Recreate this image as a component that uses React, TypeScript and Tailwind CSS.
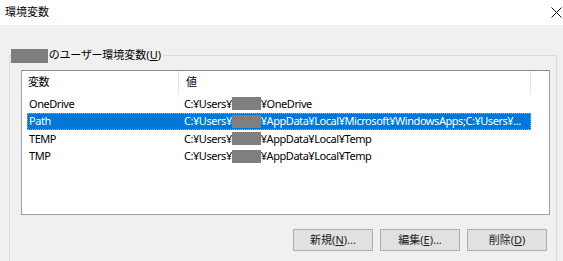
const font = "font-['Noto_Sans','Noto_Sans_CJK_JP',sans-serif]";

type Row = { name: string; pre: string; post: string; selected?: boolean };

const rows: Row[] = [
  { name: "OneDrive", pre: "C:¥Users¥", post: "¥OneDrive" },
  {
    name: "Path",
    pre: "C:¥Users¥",
    post: "¥AppData¥Local¥Microsoft¥WindowsApps;C:¥Users¥...",
    selected: true,
  },
  { name: "TEMP", pre: "C:¥Users¥", post: "¥AppData¥Local¥Temp" },
  { name: "TMP", pre: "C:¥Users¥", post: "¥AppData¥Local¥Temp" },
];

function Masked({ w }: { w: string }) {
  return <span className={`inline-block shrink-0 h-[13px] bg-[#7f7f7f] ${w}`} />;
}

function Button({ label, hot, tail }: { label: string; hot: string; tail: string }) {
  return (
    <button className="w-[80px] h-[22px] flex items-center justify-center border border-[#adadad] bg-[#e1e1e1] text-[11px] text-[#222] [font-feature-settings:'palt']">
      {label}(<span className="underline">{hot}</span>){tail}
    </button>
  );
}

export default function App() {
  return (
    <div className={`w-[563px] h-[261px] overflow-hidden bg-[#f0f0f0] text-black ${font}`}>
      {/* title bar */}
      <div className="h-[25px] bg-white flex items-center justify-between pl-[5px] pr-[1px]">
        <span className="text-[11px] [font-feature-settings:'palt']">環境変数</span>
        <svg width="11" height="11" viewBox="0 0 11 11">
          <path d="M0.5 0.5 L10.5 10.5 M10.5 0.5 L0.5 10.5" stroke="#111" strokeWidth="1" />
        </svg>
      </div>

      {/* group box */}
      <div className="relative mt-[30px] ml-[9px] w-[548px] h-[220px] border border-[#dcdcdc] pt-[14px] pl-[11px] pr-[8px]">
        <div className="absolute -top-[8px] left-[1px] flex items-center h-[15px] bg-[#f0f0f0] pr-[2px] text-[11px] [font-feature-settings:'palt']">
          <Masked w="w-[37px] h-[14px]" />
          <span className="ml-[1px]">
            のユーザー環境変数(<span className="underline">U</span>)
          </span>
        </div>

        {/* list view */}
        <div className="w-[529px] h-[145px] bg-white border border-[#a0a0a0] border-t-[#8a8a8a] text-[11px] tracking-[-0.45px]">
          <div className="h-[23px] flex items-center">
            <div className="w-[157px] shrink-0 h-full flex items-center pl-[6px] border-r border-[#e5e5e5] [font-feature-settings:'palt']">
              変数
            </div>
            <div className="w-[352px] shrink-0 h-full flex items-center pl-[7px] border-r border-[#e5e5e5]">値</div>
          </div>
          <div className="pt-[1px]">
            {rows.map((r) => (
              <div
                key={r.name}
                className={`ml-[5px] w-[504px] h-[17.5px] flex items-center overflow-hidden ${
                  r.selected ? "bg-[#0078d7] text-white outline outline-1 outline-dotted outline-[#7fb4e8] -outline-offset-1" : ""
                }`}
              >
                <div className="w-[157px] shrink-0 pl-[2px] whitespace-nowrap">{r.name}</div>
                <div className="flex items-center whitespace-nowrap">
                  <span>{r.pre}</span>
                  <Masked w="w-[29px]" />
                  <span>{r.post}</span>
                </div>
              </div>
            ))}
          </div>
        </div>

        {/* buttons */}
        <div className="flex justify-end gap-[7px] mt-[14px] pr-[1px]">
          <Button label="新規" hot="N" tail="..." />
          <Button label="編集" hot="E" tail="..." />
          <Button label="削除" hot="D" tail="" />
        </div>
      </div>
    </div>
  );
}
